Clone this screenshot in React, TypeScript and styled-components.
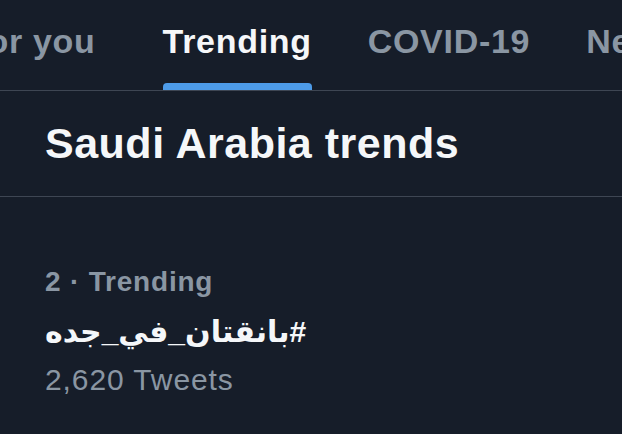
import React from "react";
import styled, { createGlobalStyle } from "styled-components";

const Global = createGlobalStyle`
  html, body { margin: 0; padding: 0; background: #161d29; }
  body { font-family: "Liberation Sans", "DejaVu Sans", Arial, sans-serif; overflow: hidden; }
`;

const Page = styled.div`
  width: 622px;
  height: 434px;
  background: #161d29;
  overflow: hidden;
  display: flex;
  flex-direction: column;
`;

const TabBar = styled.nav`
  display: flex;
  height: 90px;
  border-bottom: 1px solid #3e4653;
  margin-left: -62px;
  flex-shrink: 0;
`;

const Tab = styled.div`
  display: flex;
  flex-direction: column;
  padding: 0 28px;
  flex-shrink: 0;
  &:first-child {
    padding-right: 39px;
  }
`;

const TabLabel = styled.span<{ $active?: boolean }>`
  font-size: 34px;
  line-height: 34px;
  font-weight: 700;
  padding-top: 24px;
  white-space: nowrap;
  color: ${(p) => (p.$active ? "#f5f7f9" : "#8a96a3")};
  letter-spacing: 0.7px;
`;

const Indicator = styled.div`
  margin-top: auto;
  height: 7px;
  border-radius: 4px 4px 0 0;
  background: #4d9be8;
`;

const Header = styled.section`
  padding: 31px 45px 31px;
  border-bottom: 1px solid #3e4653;
  flex-shrink: 0;
`;

const Title = styled.h1`
  margin: 0;
  font-size: 43px;
  line-height: 43px;
  font-weight: 700;
  color: #f5f7f9;
  letter-spacing: 0.5px;
`;

const TrendRow = styled.article`
  padding: 71px 45px 0;
  display: flex;
  flex-direction: column;
`;

const Meta = styled.div`
  font-size: 28px;
  line-height: 28px;
  font-weight: 700;
  color: #8a96a3;
  letter-spacing: 0.8px;
`;

const Hashtag = styled.div`
  margin-top: 21px;
  font-size: 30px;
  line-height: 30px;
  font-weight: 700;
  color: #f5f7f9;
  direction: rtl;
  text-align: left;
  align-self: flex-start;
`;

const Count = styled.div`
  margin-top: 18px;
  font-size: 30px;
  line-height: 30px;
  font-weight: 400;
  color: #8a96a3;
  letter-spacing: 0.9px;
`;

const tabs = ["For you", "Trending", "COVID-19", "News"];

export default function App() {
  return (
    <Page>
      <Global />
      <TabBar>
        {tabs.map((t) => (
          <Tab key={t}>
            <TabLabel $active={t === "Trending"}>{t}</TabLabel>
            {t === "Trending" && <Indicator />}
          </Tab>
        ))}
      </TabBar>
      <Header>
        <Title>Saudi Arabia trends</Title>
      </Header>
      <TrendRow>
        <Meta>2 · Trending</Meta>
        <Hashtag>#بانقتان_في_جده</Hashtag>
        <Count>2,620 Tweets</Count>
      </TrendRow>
    </Page>
  );
}
